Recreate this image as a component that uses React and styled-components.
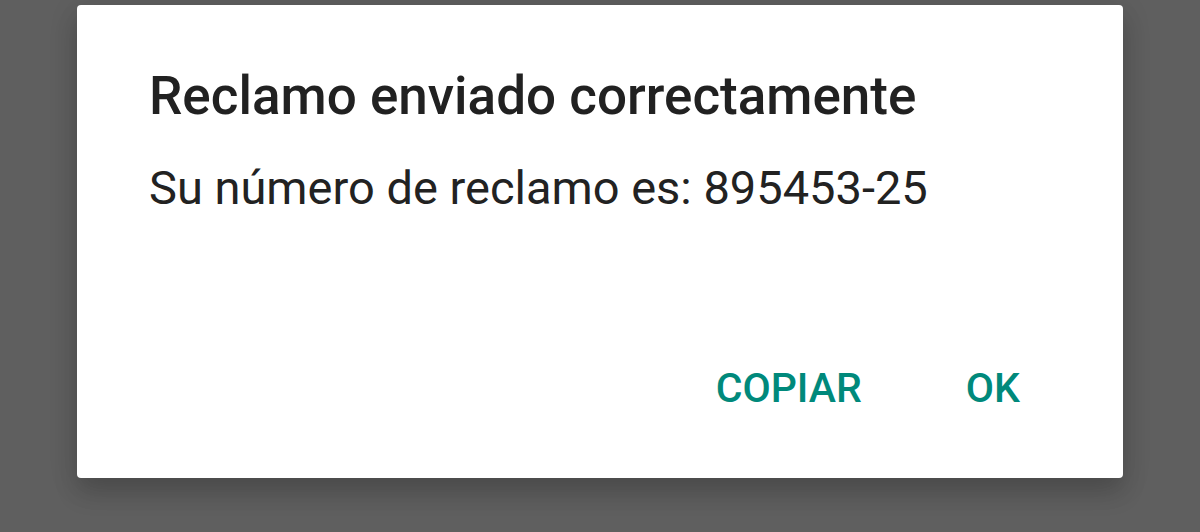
import React from 'react'
import styled, { createGlobalStyle } from 'styled-components'

const Global = createGlobalStyle`
    html, body {
        margin: 0;
        padding: 0;
        background: #5f5f5f;
    }
    body {
        font-family: Roboto, "Noto Sans", sans-serif;
    }
`

const App = () => {
    return (
        <>
            <Global />
            <Overlay>
                <Dialog>
                    <Title>Reclamo enviado correctamente</Title>
                    <Message>Su número de reclamo es: 895453-25</Message>
                    <Actions>
                        <ActionButton>COPIAR</ActionButton>
                        <ActionButton>OK</ActionButton>
                    </Actions>
                </Dialog>
            </Overlay>
        </>
    )
}

export default App

const Overlay = styled.div`
    width: 1200px;
    height: 532px;
    box-sizing: border-box;
    padding-top: 5px;
    display: flex;
    justify-content: center;
    align-items: flex-start;
    overflow: hidden;
`
const Dialog = styled.div`
    width: 1046px;
    height: 473px;
    box-sizing: border-box;
    background: #ffffff;
    border-radius: 4px;
    box-shadow: 0 16px 24px rgba(0, 0, 0, 0.14), 0 6px 30px rgba(0, 0, 0, 0.12);
    padding: 60px 103px 0 72px;
    display: flex;
    flex-direction: column;
`
const Title = styled.div`
    font-size: 53px;
    line-height: 62px;
    font-weight: 500;
    color: #212121;
`
const Message = styled.div`
    margin-top: 33px;
    font-size: 47px;
    line-height: 55px;
    font-weight: 400;
    color: #222222;
`
const Actions = styled.div`
    margin-top: 149px;
    display: flex;
    justify-content: flex-end;
    gap: 104px;
`
const ActionButton = styled.button`
    border: none;
    background: none;
    padding: 0;
    margin: 0;
    font-family: Roboto, "Noto Sans", sans-serif;
    font-size: 41px;
    line-height: 48px;
    font-weight: 500;
    color: #00897b;
    cursor: pointer;
`
